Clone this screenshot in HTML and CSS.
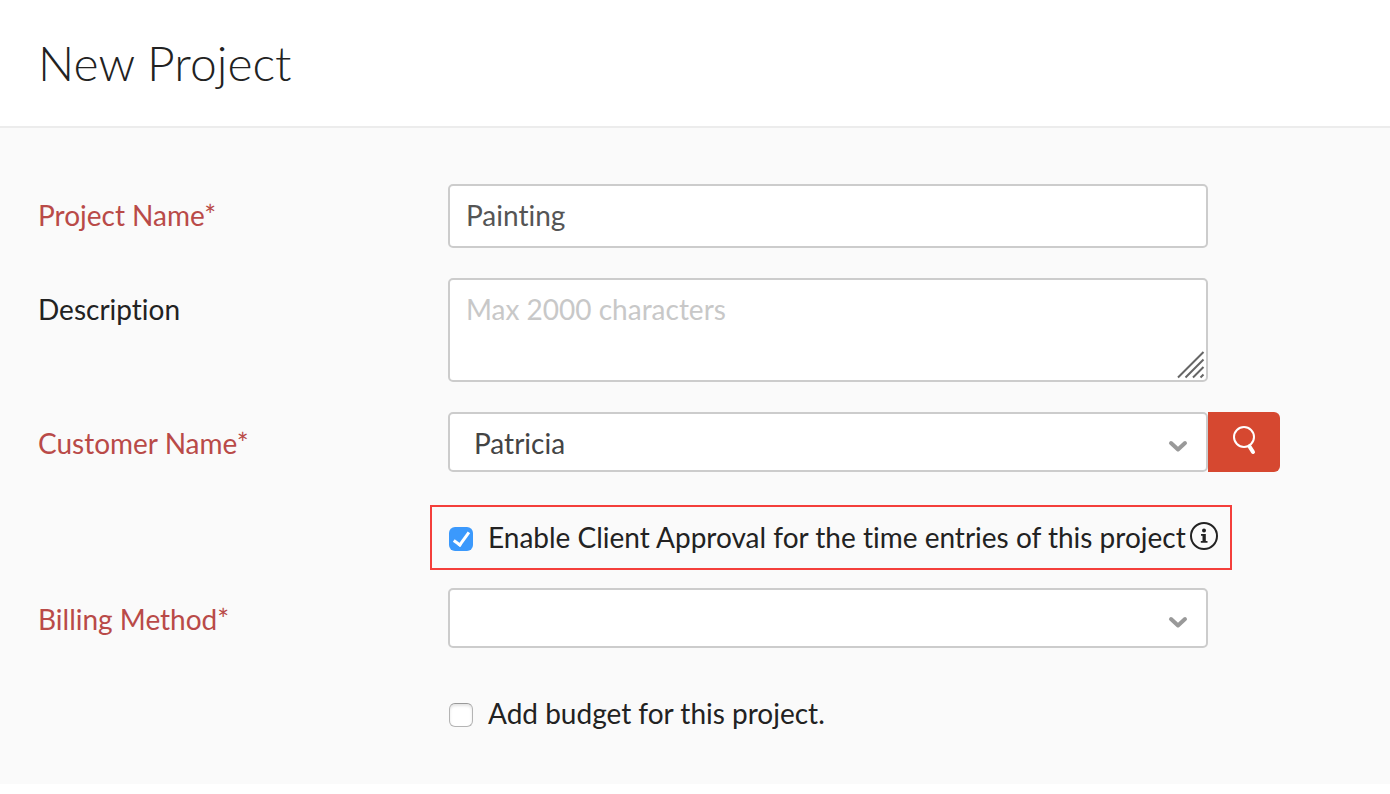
FILE: index.html
```html
<!DOCTYPE html>
<html lang="en">
<head>
    <meta charset="UTF-8">
    <meta name="viewport" content="width=device-width, initial-scale=1.0">
    <title>New Project</title>
    <link rel="stylesheet" href="styles.css">
</head>
<body>
    <header class="page-header">
        <h1>New Project</h1>
    </header>

    <form class="project-form">
        <div class="form-row">
            <label class="form-label required" for="projectName">Project Name*</label>
            <div class="field">
                <input type="text" class="form-control" id="projectName" value="Painting">
            </div>
        </div>

        <div class="form-row">
            <label class="form-label" for="description">Description</label>
            <div class="field">
                <textarea class="form-control" id="description" placeholder="Max 2000 characters"></textarea>
                <svg class="resize-grip" width="28" height="28" viewBox="0 0 28 28" aria-hidden="true">
                    <path d="M1 26.500L26.500 1M8.500 26.500L26.500 8.500M16 26.500L26.500 16M23.500 26.500L26.500 23.500"/>
                </svg>
            </div>
        </div>

        <div class="form-row">
            <label class="form-label required" for="customerName">Customer Name*</label>
            <div class="input-group">
                <div class="field">
                    <select class="form-control" id="customerName">
                        <option>Patricia</option>
                    </select>
                    <svg class="chevron" width="20" height="14" viewBox="0 0 20 14" aria-hidden="true">
                        <path d="M3 3L10 9.500L17 3"/>
                    </svg>
                </div>
                <button type="button" class="search-button" aria-label="Search customers">
                    <svg width="24" height="30" viewBox="0 0 24 30" aria-hidden="true">
                        <circle cx="12" cy="12" r="10"/>
                        <path class="handle" d="M17.500 21.500L21 27"/>
                    </svg>
                </button>
            </div>
        </div>

        <div class="check-row highlighted">
            <input type="checkbox" class="checkbox" id="clientApproval" checked>
            <label for="clientApproval">Enable Client Approval for the time entries of this project</label>
            <svg class="info-icon" width="28" height="28" viewBox="0 0 28 28" aria-hidden="true">
                <circle class="ring" cx="14" cy="14" r="13"/>
                <circle cx="14" cy="8.500" r="2"/>
                <path d="M11 12H15.800V19H17.500V20.800H10.800V19H12.500V13.800H11Z"/>
            </svg>
        </div>

        <div class="form-row">
            <label class="form-label required" for="billingMethod">Billing Method*</label>
            <div class="field">
                <select class="form-control" id="billingMethod">
                    <option></option>
                </select>
                <svg class="chevron" width="20" height="14" viewBox="0 0 20 14" aria-hidden="true">
                    <path d="M3 3L10 9.500L17 3"/>
                </svg>
            </div>
        </div>

        <div class="check-row">
            <input type="checkbox" class="checkbox" id="addBudget">
            <label for="addBudget">Add budget for this project.</label>
        </div>
    </form>
</body>
</html>
```
FILE: styles.css
```css
*,
*::before {
    box-sizing: border-box;
}
body {
    margin: 0;
    font-family: Lato, sans-serif;
    font-size: 28px;
    line-height: 36px;
    font-variant-ligatures: none;
    color: #222;
    background-color: #fff;
}
.page-header {
    padding: 33px 38px;
    border-bottom: 2px solid #ececec;
}
h1 {
    margin: 0;
    font-size: 48px;
    font-weight: 300;
    line-height: 60px;
}
.project-form {
    padding: 56px 38px 46px;
    background-color: #fafafa;
}
.form-row {
    display: grid;
    grid-template-columns: 410px minmax(0, 1fr);
    margin-bottom: 30px;
}
.form-label {
    padding-top: 13px;
}
.required {
    color: #b94a48;
}
.field {
    position: relative;
    width: 100%;
    max-width: 760px;
}
.form-control {
    display: block;
    width: 100%;
    height: 64px;
    margin: 0;
    padding: 11px 16px 13px;
    border: 2px solid #ccc;
    border-radius: 5px;
    background-color: #fff;
    color: #555;
    font: inherit;
    font-variant-ligatures: none;
    outline: none;
}
textarea.form-control {
    height: 104px;
    resize: none;
}
.form-control::placeholder {
    color: #c8c8c8;
    opacity: 1;
}
select.form-control {
    height: 60px;
    padding: 2px 24px 0;
    color: #444;
    appearance: none;
}
.resize-grip {
    position: absolute;
    right: 3px;
    bottom: 3px;
    fill: none;
    stroke: #666;
    stroke-width: 2;
    pointer-events: none;
}
.chevron {
    position: absolute;
    top: 28px;
    right: 20px;
    fill: none;
    stroke: #999;
    stroke-width: 4;
    stroke-linecap: round;
    stroke-linejoin: round;
    pointer-events: none;
}
.input-group {
    display: flex;
}
.search-button {
    flex: 0 0 72px;
    height: 60px;
    padding: 0 0 4px;
    border: none;
    border-radius: 0 6px 6px 0;
    background-color: #d64830;
    cursor: pointer;
}
.search-button svg {
    display: block;
    margin: 0 auto;
    fill: none;
    stroke: #fff;
    stroke-width: 2;
    stroke-linecap: round;
}
.search-button .handle {
    stroke-width: 4;
}
.check-row {
    display: flex;
    align-items: center;
    width: fit-content;
    min-height: 48px;
    margin-left: 411px;
}
.check-row label {
    padding-bottom: 2px;
}
.form-row + .check-row {
    margin-top: 42px;
}
.check-row.highlighted {
    min-height: 65px;
    margin: 33px 0 18px 392px;
    padding: 0 12px 0 17px;
    border: 2px solid #f43f3b;
}
.checkbox {
    flex: none;
    width: 24px;
    height: 24px;
    margin: 2px 15px 0 0;
    border: 1px solid #b4b4b4;
    border-top-color: #999;
    border-radius: 6px;
    background-color: #fff;
    box-shadow: inset 0 2px 3px #e4e4e4;
    appearance: none;
}
.checkbox:checked {
    border: none;
    background-color: #3b99fc;
    box-shadow: none;
}
.checkbox:checked::before {
    content: "";
    display: block;
    width: 9px;
    height: 17px;
    margin: 2px 0 0 8px;
    border: solid #fff;
    border-width: 0 3px 3px 0;
    transform: rotate(36deg);
}
.info-icon {
    flex: none;
    margin: 0 0 4px 4px;
    fill: #222;
}
.info-icon .ring {
    fill: none;
    stroke: #222;
    stroke-width: 2;
}
```
